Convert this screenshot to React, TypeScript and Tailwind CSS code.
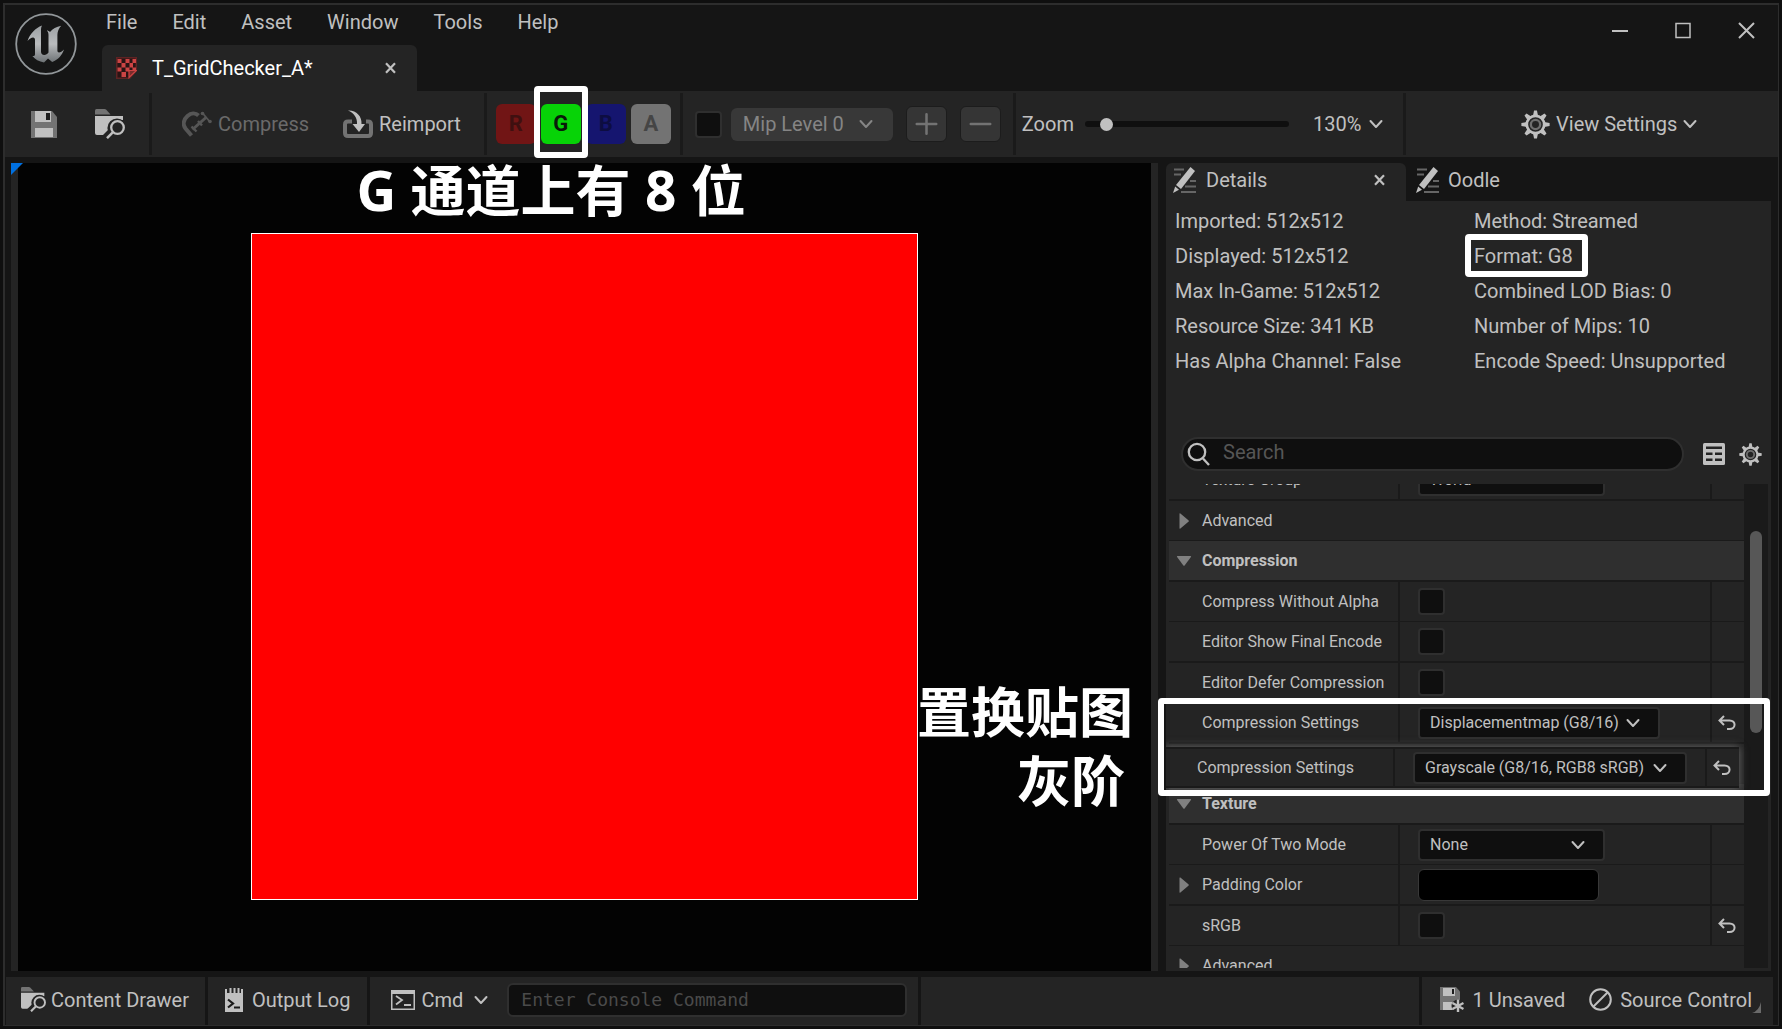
import { useState } from "react";
import type { ReactNode } from "react";

const menus = ["File", "Edit", "Asset", "Window", "Tools", "Help"];

const info = [
  ["Imported: 512x512", "Method: Streamed"],
  ["Displayed: 512x512", "Format: G8"],
  ["Max In-Game: 512x512", "Combined LOD Bias: 0"],
  ["Resource Size: 341 KB", "Number of Mips: 10"],
  ["Has Alpha Channel: False", "Encode Speed: Unsupported"],
];

const channels = [
  { name: "R", style: "bg-[#711515] text-[#3f1010]" },
  { name: "G", style: "bg-[#07d307] text-[#0a1a0a]" },
  { name: "B", style: "bg-[#15156f] text-[#0d0d42]" },
  { name: "A", style: "bg-[#737373] text-[#454545]" },
];

/* ---------- icons ---------- */

const Chevron = ({ className = "" }: { className?: string }) => (
  <svg width="14" height="10" viewBox="0 0 14 10" className={`shrink-0 ${className}`} fill="none" stroke="currentColor" strokeWidth="2" strokeLinecap="round" strokeLinejoin="round">
    <path d="M1.5 2 7 8l5.5-6" />
  </svg>
);

const CloseX = () => (
  <svg width="11" height="12" viewBox="0 0 11 12" fill="none" stroke="currentColor" strokeWidth="2.2">
    <path d="M1 1.2l9 9.6M10 1.2l-9 9.6" />
  </svg>
);

const Gear = ({ size }: { size: number }) => (
  <svg width={size} height={size} viewBox="0 0 30 30" className="shrink-0">
    {[0, 45, 90, 135, 180, 225, 270, 315].map((a) => (
      <path key={a} d="M12.4 6l1.1-5.6h3l1.1 5.6z" fill="currentColor" transform={`rotate(${a} 15 15)`} />
    ))}
    <circle cx="15" cy="15" r="9" fill="none" stroke="currentColor" strokeWidth="2.8" />
    <circle cx="15" cy="15" r="4.8" fill="none" stroke="#6f6f6f" strokeWidth="2.4" />
  </svg>
);

const Save = () => (
  <svg width="26" height="27" viewBox="0 0 26 27">
    <path d="M0 0h21l5 6v21H0z" fill="#737373" />
    <path d="M4 0h16v11H4zM4 17h18v9H4z" fill="#c0c0c0" />
    <path d="M15 2h4v7h-4z" fill="#1c1c1c" />
  </svg>
);

const Browse = ({ size }: { size: number }) => (
  <svg width={size} height={size} viewBox="0 0 30 30" className="shrink-0">
    <path d="M0 5.500V1.500Q0 0 1.500 0H9.500q1 0 1.800.8L15.500 5.500z" fill="#737373" />
    <path d="M0 7h28v4H0zM0 9h22v17H2q-2 0-2-2z" fill="#c0c0c0" />
    <circle cx="22" cy="19" r="9.600" fill="#242424" />
    <path d="M17 22l-7 7" stroke="#242424" strokeWidth="7" />
    <circle cx="22.500" cy="18.500" r="6.300" fill="none" stroke="#c0c0c0" strokeWidth="2.300" />
    <path d="M18 23.200l-6 6" stroke="#c0c0c0" strokeWidth="2.500" />
  </svg>
);

const Clamp = () => (
  <svg width="30" height="27" viewBox="0 0 30 27" fill="none" stroke="#565656">
    <path d="M9.500 24.500L3.500 17.500C.5 13.500 1.500 8.500 5.500 5 9 1.800 13.500 1.500 16.500 4.500" strokeWidth="4" />
    <path d="M10.500 18.500L24 6.500" strokeWidth="3" />
    <path d="M9.500 15.500l5 5M16 10l4 4.500" strokeWidth="2.400" />
    <path d="M20.500 2l7.500 9" strokeWidth="1.800" />
    <circle cx="20.500" cy="2.500" r="1.800" fill="#565656" stroke="none" />
    <circle cx="28" cy="10.500" r="1.800" fill="#565656" stroke="none" />
  </svg>
);

const ReimportIcon = () => (
  <svg width="30" height="29" viewBox="0 0 30 29">
    <path d="M9 11.500H5q-3 0-3 3V23q0 3 3 3h20q3 0 3-3v-8.500q0-3-3-3h-2" fill="none" stroke="#737373" strokeWidth="4" />
    <path d="M5 .5C13 0 19 6 18.500 14H22l-6 8-6.500-8h4.500C14.500 8 11 3 5 .5z" fill="#c0c0c0" />
  </svg>
);

const Pencil = () => (
  <svg width="23" height="27" viewBox="0 0 23 27" className="shrink-0">
    <path d="M1 2.500h10M1 7.500h7M17 14h6M12 19.500h11M8 25h15" stroke="#666" strokeWidth="2" />
    <path d="M17.500 0L22 4 8 22l-5-4z" fill="#c0c0c0" />
    <path d="M2.200 19.500L6 22.800 0 26z" fill="#c0c0c0" />
  </svg>
);

const TextureIcon = () => (
  <svg width="21" height="22" viewBox="0 0 21 22">
    <path d="M0 0h21v14l-7 8H0z" fill="#5e2323" />
    <path d="M1.500 1.500h18v12l-6 7h-12z" fill="#2a1414" />
    <path d="M1.500 2h4v4h-4zM9.500 2h4v4h-4zM16.500 2h3.500v4h-3.500zM5.500 6h4v4.500h-4zM13.500 6h3.500v4.500h-3.500zM1.500 10.500h4v4h-4zM9.500 10.500h4v4h-4zM16.500 10.500H20V13h-3.500zM5.500 15h4.500v5H5.500z" fill="#cc4444" />
    <path d="M13 20.500V13.500h7.500z" fill="#7a2c2c" stroke="#cc4444" strokeWidth="1.200" />
  </svg>
);

const Logo = () => (
  <svg width="62" height="62" viewBox="0 0 62 62">
    <defs>
      <linearGradient id="steel" x1="0" y1="0" x2="0" y2="1">
        <stop offset="0" stopColor="#9da1a4" />
        <stop offset="0.5" stopColor="#b9bbbd" />
        <stop offset="1" stopColor="#6d7275" />
      </linearGradient>
    </defs>
    <circle cx="31" cy="31" r="29.800" fill="#161616" stroke="#92979a" strokeWidth="1.800" />
    <path
      d="M27 12.500c-6.500 2.500-12 8-14.500 15.500 2-2.300 3.800-3.600 5.500-3.600 1.400 0 2 1 2 2.600V41c0 1.800-.8 2.400-2.600 2 2.600 3.500 6.600 5.600 11.600 6.500l4-4 4.200 3.500C43.500 46.500 47 42 49 36.500c-1.800 1.800-3.500 3-5 3-1 0-1.600-.7-1.600-2V22c0-3.500 1.500-6.500 3.800-9.200-5 1-8.500 3-11.200 6.200-1-1-2-1.500-3.200-1.500 1.300 1.200 1.700 2.600 1.700 4.500v17.500c-1 1.500-2.500 2.500-4.200 2.500-2.200 0-3.300-1.200-3.300-3.500V17.500c0-2 .2-3.500 1-5z"
      fill="url(#steel)"
    />
  </svg>
);

const Reset = () => (
  <svg width="18" height="16" viewBox="0 0 18 16" fill="none" stroke="#c0c0c0" strokeWidth="2">
    <path d="M6 1L1.500 5.500 6 10M2 5.500h9.500c7 0 6.500 8.500 0 8.500H9" />
  </svg>
);

const Lens = () => (
  <svg width="24" height="24" viewBox="0 0 24 24" fill="none" stroke="#c0c0c0" strokeWidth="2.300">
    <circle cx="10" cy="10" r="8.200" />
    <path d="M16 16.500l6 6.500" />
  </svg>
);

const TableIcon = () => (
  <svg width="22" height="22" viewBox="0 0 22 22">
    <rect width="22" height="22" rx="1.500" fill="#c0c0c0" />
    <path d="M3 3.500h16V6H3zM3 9.500h6.500V12H3zM12 9.500h7V12h-7zM3 15.500h6.500V18H3zM12 15.500h7V18h-7z" fill="#242424" />
  </svg>
);

const LogIcon = () => (
  <svg width="18" height="24" viewBox="0 0 18 24">
    <path d="M0 1h2v4h2.500V0h2v5h2V0h2v5h2V0h2v5H16V1h2v23H0z" fill="#c0c0c0" />
    <path d="M3 11.500l5 4-5 4" fill="none" stroke="#1a1a1a" strokeWidth="2.200" />
    <path d="M9 19.500h6" stroke="#1a1a1a" strokeWidth="2" />
  </svg>
);

const CmdIcon = () => (
  <svg width="24" height="20" viewBox="0 0 24 20" fill="none" stroke="#c0c0c0">
    <path d="M.75.75h22.500v18.500H.75z" strokeWidth="1.500" />
    <path d="M0 2h24" strokeWidth="4" />
    <path d="M5 6l6 4-6 4.500M13 15h7" strokeWidth="1.800" />
  </svg>
);

const Unsaved = () => (
  <svg width="24" height="25" viewBox="0 0 24 25">
    <path d="M0 0h16l4 4.500V23H0z" fill="#737373" />
    <path d="M3 1h12v8H3zM3 15h11v8H3z" fill="#c0c0c0" />
    <path d="M12 2h2v5h-2z" fill="#1c1c1c" />
    <circle cx="18" cy="19" r="6.500" fill="#242424" />
    <path d="M18 12.500v13M12.500 16l11 6M23.500 16l-11 6" stroke="#c0c0c0" strokeWidth="2.400" />
  </svg>
);

const NoSource = () => (
  <svg width="23" height="23" viewBox="0 0 23 23" fill="none" stroke="#c0c0c0" strokeWidth="2">
    <circle cx="11.500" cy="11.500" r="10.300" />
    <path d="M4.500 18.500l14-14" />
  </svg>
);

/* ---------- shared pieces ---------- */

const Divider = () => <div className="h-[62px] w-[3px] shrink-0 bg-[#1a1a1a]" />;

// white marker box drawn over the UI
const Marker = ({ className }: { className: string }) => (
  <div className={`pointer-events-none absolute z-20 rounded-[4px] border-[6px] border-white ${className}`} />
);

const Check = ({ label, id }: { label: string; id?: string }) => (
  <input
    type="checkbox"
    id={id}
    aria-label={label}
    className="size-[27px] shrink-0 appearance-none rounded-[4px] border-2 border-[#2f2f2f] bg-[#0f0f0f] checked:bg-[#0070e0]"
  />
);

const Combo = ({ id, value, width }: { id: string; value: string; width: string }) => (
  <div className={`relative ${width}`}>
    <select id={id} className="h-8 w-full appearance-none rounded-[4px] border-2 border-[#2f2f2f] bg-[#0f0f0f] pl-[10px] text-base text-[#c0c0c0]">
      <option>{value}</option>
    </select>
    <Chevron className="pointer-events-none absolute right-5 top-[11px]" />
  </div>
);

const Arrow = ({ open }: { open?: boolean }) => (
  <svg width="16" height="16" viewBox="0 0 16 16" fill="#808080">
    {open ? <path d="M1.500 3h13q1 0 .4.900L8.800 12.300q-.8 1-1.600 0L1.100 3.900Q.500 3 1.500 3z" /> : <path d="M3.500 1v14q0 1 .9.400l8-6.600q1-.8 0-1.600l-8-6.600q-.9-.6-.9.400z" />}
  </svg>
);

type RowProps = { label: string; htmlFor?: string; expandable?: boolean; reset?: boolean; className?: string; children?: ReactNode };

const Row = ({ label, htmlFor, expandable, reset, className = "", children }: RowProps) => (
  <div className={`flex h-10 border-b border-[#1a1a1a] bg-[#242424] odd:h-[41px] odd:border-b-2 ${className}`}>
    <div className="flex w-[229px] shrink-0 items-center gap-[10px] pl-[7px]">
      <span className="w-4">{expandable && <Arrow />}</span>
      <label htmlFor={htmlFor} className="whitespace-nowrap">{label}</label>
    </div>
    <div className="flex flex-1 items-center border-l-2 border-[#1a1a1a] pl-[18px]">{children}</div>
    <div className="flex w-[34px] shrink-0 items-center border-l-2 border-[#1a1a1a] pl-[6px]">
      {reset && <button aria-label={`Reset ${label}`}><Reset /></button>}
    </div>
  </div>
);

const Section = ({ label, open }: { label: string; open?: boolean }) => (
  <div className="h-10 border-b border-[#1a1a1a] odd:h-[41px] odd:border-b-2">
    <button className={`flex size-full items-center gap-[10px] pl-[7px] ${open ? "bg-[#2f2f2f] font-bold" : ""}`}>
      <Arrow open={open} />
      {label}
    </button>
  </div>
);

/* ---------- page parts ---------- */

const TitleBar = () => (
  <header className="flex h-[86px] shrink-0 pl-[10px]">
    <div className="mt-2"><Logo /></div>
    <div className="ml-[25px] flex-1">
      <nav className="flex h-10 gap-[35px] pl-1 pt-[5px] leading-6">
        {menus.map((m) => <button key={m} className="h-6">{m}</button>)}
      </nav>
      <div className="flex h-[46px] w-[315px] items-center rounded-t-[6px] bg-[#242424] pl-[14px] pr-[21px]">
        <TextureIcon />
        <span className="ml-[15px] flex-1 text-white">T_GridChecker_A*</span>
        <button aria-label="Close tab"><CloseX /></button>
      </div>
    </div>
    <div className="mr-[23px] mt-[17px] flex h-[17px] gap-[47px]">
      <button aria-label="Minimize"><svg width="16" height="17" stroke="#c0c0c0" strokeWidth="2"><path d="M0 9h16" /></svg></button>
      <button aria-label="Maximize"><svg width="16" height="17" fill="none" stroke="#c0c0c0" strokeWidth="1.500"><path d="M1 1.500h14v14H1z" /></svg></button>
      <button aria-label="Close"><svg width="17" height="17" stroke="#c0c0c0" strokeWidth="2"><path d="M1 1l15 15M16 1L1 16" /></svg></button>
    </div>
  </header>
);

const Toolbar = () => {
  const [zoom, setZoom] = useState(8);

  return (
    <div className="flex h-[66px] shrink-0 items-center whitespace-nowrap bg-[#242424] pl-[26px]">
      <button aria-label="Save"><Save /></button>
      <button aria-label="Browse" className="mx-6 pl-[14px]"><Browse size={30} /></button>
      <Divider />
      <button className="ml-[30px] flex items-center gap-[6px] text-[#6a6a6a]"><Clamp />Compress</button>
      <button className="ml-[34px] mr-[23px] flex items-center gap-[6px]"><ReimportIcon />Reimport</button>
      <Divider />
      <div className="flex gap-[5px] px-[9px]">
        {channels.map((c) => (
          <div key={c.name} className="relative">
            <button className={`size-10 rounded-[6px] text-[22px] font-bold ${c.style}`}>{c.name}</button>
            {c.name === "G" && <Marker className="-inset-x-[7px] -top-[18px] h-[72px]" />}
          </div>
        ))}
      </div>
      <Divider />
      <div className="flex items-center gap-[13px] px-3">
        <div className="flex items-center gap-[9px]">
          <Check label="Use mip level" />
          <div className="relative w-[162px] text-[#858585]">
            <select aria-label="Mip level" className="h-[33px] w-full appearance-none rounded-[6px] bg-[#383838] pl-3">
              <option>Mip Level 0</option>
            </select>
            <Chevron className="pointer-events-none absolute right-5 top-[11px]" />
          </div>
        </div>
        {["M10 20h20M20 10v20", "M10 20h20"].map((d, i) => (
          <button key={d} aria-label={i ? "Lower mip" : "Higher mip"} className="rounded-[6px] border border-[#1c1c1c] bg-[#353535]">
            <svg width="39" height="34" viewBox="0 3 40 34" stroke="#737373" strokeWidth="2.600" strokeLinecap="round"><path d={d} /></svg>
          </button>
        ))}
      </div>
      <Divider />
      <div className="flex items-center pl-[6px] pr-5">
        <label htmlFor="zoom">Zoom</label>
        <input
          id="zoom"
          type="range"
          value={zoom}
          onChange={(e) => setZoom(Number(e.target.value))}
          className="ml-[11px] mr-6 h-[6px] w-[204px] appearance-none rounded-full bg-[#0f0f0f] [&::-webkit-slider-thumb]:size-[13px] [&::-webkit-slider-thumb]:appearance-none [&::-webkit-slider-thumb]:rounded-full [&::-webkit-slider-thumb]:bg-[#c0c0c0]"
        />
        <button className="flex items-center gap-2">130% <Chevron /></button>
      </div>
      <Divider />
      <div className="flex flex-1 justify-center pl-[34px]">
        <button className="flex items-center gap-[6px]"><Gear size={29} />View Settings <Chevron /></button>
      </div>
    </div>
  );
};

const Viewport = () => (
  <section className="relative flex min-w-0 flex-1 items-center justify-center border-x-[7px] border-[#242424] bg-[#030303] pb-[2px]">
    <svg width="12" height="12" className="absolute -left-[7px] top-0"><path d="M0 0h12L0 12z" fill="#0070e0" /></svg>
    <div className="size-[667px] border border-white bg-[#ff0000]" />
    <h1 className="absolute left-1/2 top-0 -ml-[228px] whitespace-nowrap font-['Open_Sans','Noto_Sans_CJK_SC',sans-serif] text-[55px] font-bold leading-[54px] text-white">
      G 通道上有 8 位
    </h1>
    <p className="absolute right-[26px] top-[512px] text-right font-['Noto_Sans_CJK_SC',sans-serif] text-[54px] font-bold leading-[69px] text-white">
      <span className="-mr-2 block">置换贴图</span>
      灰阶
    </p>
  </section>
);

const Details = () => (
  <aside className="relative ml-2 flex w-[605px] shrink-0 flex-col">
    <div className="flex h-[38px] shrink-0">
      <button className="flex w-[240px] items-center rounded-t-[6px] bg-[#242424] pb-1 pl-[7px] pr-[21px]">
        <Pencil />
        <span className="ml-[10px] flex-1 text-left">Details</span>
        <CloseX />
      </button>
      <button className="flex items-center gap-[9px] pb-1 pl-[10px]"><Pencil />Oodle</button>
    </div>
    <div className="flex min-h-0 flex-1 flex-col bg-[#242424] pb-[3px]">
      <dl className="grid shrink-0 grid-cols-[299px_1fr] pl-[9px] pt-[3px] leading-[35px]">
        {info.flat().map((t) => (
          <div key={t} className="relative">
            {t}
            {t.startsWith("Format") && <Marker className="-left-[9px] -top-[5px] h-[43px] w-[123px]" />}
          </div>
        ))}
      </dl>
      <div className="mt-[58px] flex shrink-0 items-center pl-[15px] pr-[9px]">
        <div className="flex h-[34px] flex-1 items-center rounded-full border-2 border-[#2f2f2f] bg-[#0f0f0f] pl-1">
          <Lens />
          <input aria-label="Search" placeholder="Search" className="ml-3 h-[26px] flex-1 bg-transparent pb-1 outline-hidden placeholder:text-[#565656]" />
        </div>
        <button aria-label="Table view" className="ml-[19px] mr-[14px]"><TableIcon /></button>
        <button aria-label="Settings"><Gear size={23} /></button>
      </div>
      <div className="mt-[13px] flex min-h-0 flex-1 overflow-hidden pl-[3px] pr-[3px] text-base">
        <div className="-mt-[24px] flex-1">
          <Row label="Texture Group" htmlFor="group"><Combo id="group" value="World" width="w-[187px]" /></Row>
          <Section label="Advanced" />
          <Section label="Compression" open />
          <Row label="Compress Without Alpha" htmlFor="noalpha"><Check id="noalpha" label="Compress Without Alpha" /></Row>
          <Row label="Editor Show Final Encode" htmlFor="final"><Check id="final" label="Editor Show Final Encode" /></Row>
          <Row label="Editor Defer Compression" htmlFor="defer"><Check id="defer" label="Editor Defer Compression" /></Row>
          <Row label="Compression Settings" htmlFor="disp" reset><Combo id="disp" value="Displacementmap (G8/16)" width="w-[242px]" /></Row>
          {/* second variant of the row, laid over the list */}
          <div className="relative h-10">
            <div className="absolute -left-[5px] top-[3px] z-10 w-full shadow-[0_0_8px_#6a6a6a]">
              <Row label="Compression Settings" htmlFor="gray" reset className="border-t-2"><Combo id="gray" value="Grayscale (G8/16, RGB8 sRGB)" width="w-[274px]" /></Row>
            </div>
          </div>
          <Section label="Texture" open />
          <Row label="Power Of Two Mode" htmlFor="pow"><Combo id="pow" value="None" width="w-[187px]" /></Row>
          <Row label="Padding Color" expandable><button aria-label="Padding Color" className="h-8 w-[181px] rounded-[6px] border border-[#383838] bg-black" /></Row>
          <Row label="sRGB" htmlFor="srgb" reset><Check id="srgb" label="sRGB" /></Row>
          <Section label="Advanced" />
        </div>
        <div className="w-6 shrink-0 bg-[#1a1a1a] pl-[6px] pt-[47px]">
          <div className="h-[202px] w-3 rounded-full bg-[#575757]" />
        </div>
      </div>
    </div>
    <Marker className="-left-2 right-px top-[535px] h-[98px]" />
  </aside>
);

const StatusBar = () => (
  <footer className="mr-[5px] flex h-12 shrink-0 gap-[3px] whitespace-nowrap pl-px *:flex *:items-center *:bg-[#242424] *:pb-[3px]">
    <button className="gap-[5px] pl-[15px] pr-4"><Browse size={25} />Content Drawer</button>
    <button className="gap-[9px] pl-[17px] pr-[17px]"><LogIcon />Output Log</button>
    <div className="pl-[21px] pr-[11px]">
      <button className="flex items-center gap-[6px]"><CmdIcon />Cmd<Chevron className="ml-[5px]" /></button>
      <input
        aria-label="Console command"
        placeholder="Enter Console Command"
        className="ml-[19px] h-[34px] w-[400px] rounded-[6px] border-2 border-[#2f2f2f] bg-[#0f0f0f] pl-3 font-['DejaVu_Sans_Mono',monospace] text-[18px] outline-hidden placeholder:text-[#4a4a4a]"
      />
    </div>
    <div className="flex-1" />
    <div className="relative gap-6 pl-[18px] pr-[21px]">
      <button className="flex items-center gap-2"><Unsaved />1 Unsaved</button>
      <button className="flex items-center gap-2"><NoSource />Source Control</button>
      <svg width="9" height="11" className="absolute bottom-3 right-3"><path d="M9 0v11H0q7-2 9-11z" fill="#6a6a6a" /></svg>
    </div>
  </footer>
);

const App = () => (
  <div className="h-screen overflow-hidden bg-[#0f0f0f] p-[3px] font-[Roboto,sans-serif] text-[20px] leading-6 text-[#c0c0c0]">
    <div className="flex h-full flex-col border-b border-l-2 border-r border-t-2 border-[#2d2d2d] bg-[#151515]">
      <TitleBar />
      <Toolbar />
      <main className="flex min-h-0 flex-1 py-[6px] pl-[6px] pr-[7px]">
        <Viewport />
        <Details />
      </main>
      <StatusBar />
    </div>
  </div>
);

export default App;
